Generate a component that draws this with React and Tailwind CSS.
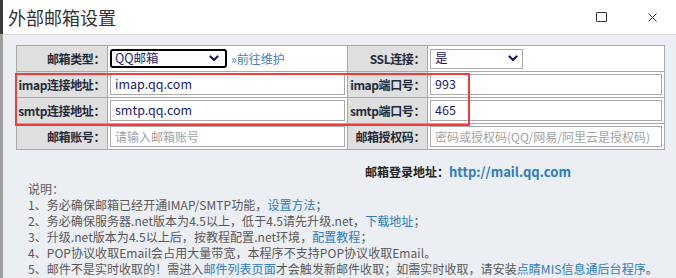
const font = "font-['Noto_Sans_CJK_SC','Noto_Sans',sans-serif]";

function Chevron() {
  return (
    <svg width="10" height="7" viewBox="0 0 10 7" className="shrink-0">
      <path d="M1.5 1.5 L5 5 L8.5 1.5" fill="none" stroke="#1a1a5e" strokeWidth="2.2" strokeLinecap="round" strokeLinejoin="round" />
    </svg>
  );
}

function Label({ children }) {
  return (
    <div className="flex items-center justify-end overflow-hidden whitespace-nowrap bg-[#dfdfdf] pr-[2px] text-[12px] font-bold tracking-[-0.4px] text-[#1f2a3a]">
      {children}
    </div>
  );
}

function Field({ value, placeholder }) {
  return (
    <div className="flex items-center bg-white px-[2px]">
      <div
        className={`flex h-[21px] w-full items-center overflow-hidden whitespace-nowrap border border-[#a9a9a9] px-[4px] text-[12.5px] ${
          value ? 'text-[#1b1b70]' : 'text-[#a3a3a3] text-[12px]'
        }`}
      >
        {value || placeholder}
      </div>
    </div>
  );
}

export default function App() {
  return (
    <div className={`flex h-[278px] w-[676px] overflow-hidden ${font}`}>
      <div className="flex w-[3px] flex-col">
        <div className="h-[34px] bg-[#3a3a3a]" />
        <div className="flex-1 bg-[#a0a0a0]" />
      </div>
      <div className="flex flex-1 flex-col">
        <div className="flex h-[35px] items-center border-b border-[#dedede] bg-white pl-[5px]">
          <span className="text-[18px] leading-none text-[#333]">外部邮箱设置</span>
          <div className="ml-auto flex items-center">
            <div className="h-[10px] w-[11px] rounded-[1px] border border-[#333]" />
            <svg width="9" height="9" viewBox="0 0 9 9" className="ml-[41px] mr-[19px]">
              <path d="M0.5 0.5 L8.5 8.5 M8.5 0.5 L0.5 8.5" stroke="#333" strokeWidth="1" />
            </svg>
          </div>
        </div>

        <div className="relative flex-1 bg-[#ebeef3] pl-[13px] pt-[10px]">
          <div className="grid w-[649px] grid-cols-[90px_239px_79px_236px] grid-rows-[25px_25px_25px_25px] gap-[1px] border border-[#a8a8a8] bg-[#a8a8a8] leading-none">
            <Label>邮箱类型：</Label>
            <div className="flex items-center bg-white px-[2px]">
              <div className="flex h-[19px] w-[117px] items-center justify-between rounded-[3px] border-2 border-black pl-[3px] pr-[6px] text-[12.5px] text-[#1b1b70]">
                <span>QQ邮箱</span>
                <Chevron />
              </div>
              <span className="ml-[4px] text-[12px] text-[#4a7fc4]">»前往维护</span>
            </div>
            <Label>SSL连接：</Label>
            <div className="flex items-center bg-white px-[2px]">
              <div className="flex h-[20px] w-[93px] items-center justify-between border border-[#a9a9a9] pl-[4px] pr-[4px] text-[12.5px] text-[#1b1b70]">
                <span>是</span>
                <Chevron />
              </div>
            </div>

            <Label>imap连接地址：</Label>
            <Field value="imap.qq.com" />
            <Label>imap端口号：</Label>
            <Field value="993" />

            <Label>smtp连接地址：</Label>
            <Field value="smtp.qq.com" />
            <Label>smtp端口号：</Label>
            <Field value="465" />

            <Label>邮箱账号：</Label>
            <Field placeholder="请输入邮箱账号" />
            <Label>邮箱授权码：</Label>
            <Field placeholder="密码或授权码(QQ/网易/阿里云是授权码)" />
          </div>

          <div className="absolute left-[12px] top-[38px] h-[53px] w-[455px] border-2 border-[#f03c3c]" />

          <div className="mt-[14px] pl-[349px] text-[12px] leading-[16px]">
            <span className="font-bold text-[#222]">邮箱登录地址：</span>
            <span className="font-bold text-[13px] text-[#2f7cc0]">http://mail.qq.com</span>
          </div>

          <div className="mt-[1px] pl-[12px] text-[12px] leading-[16px] tracking-[0.05px] text-[#595959] whitespace-nowrap">
            <div>说明：</div>
            <div>
              1、务必确保邮箱已经开通IMAP/SMTP功能，<span className="text-[#2f7cc0]">设置方法</span>；
            </div>
            <div>
              2、务必确保服务器.net版本为4.5以上，低于4.5请先升级.net，<span className="text-[#2f7cc0]">下载地址</span>；
            </div>
            <div>
              3、升级.net版本为4.5以上后，按教程配置.net环境，<span className="text-[#2f7cc0]">配置教程</span>；
            </div>
            <div>4、POP协议收取Email会占用大量带宽，本程序不支持POP协议收取Email。</div>
            <div>
              5、邮件不是实时收取的！需进入<span className="text-[#2f7cc0]">邮件列表页面</span>才会触发新邮件收取；如需实时收取，请安装
              <span className="text-[#2f7cc0]">点睛MIS信息通后台程序</span>。
            </div>
          </div>
        </div>
      </div>
    </div>
  );
}
